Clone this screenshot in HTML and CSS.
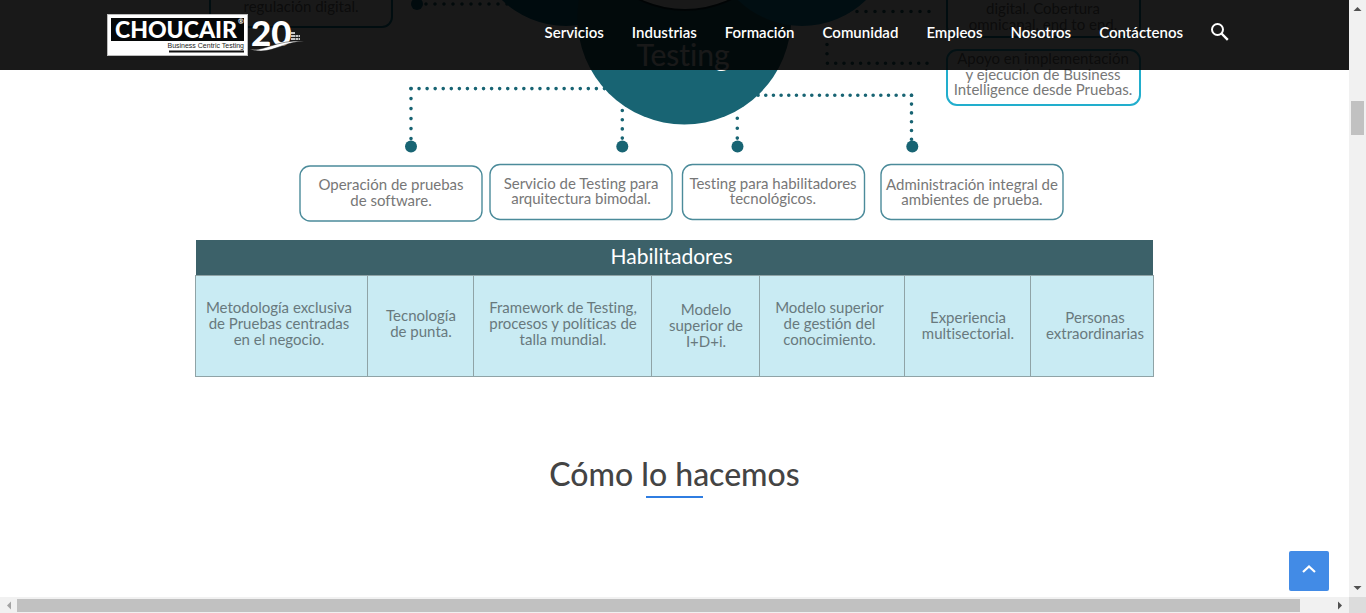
FILE: index.html
```html
<!DOCTYPE html>
<html lang="es">
<head>
<meta charset="utf-8">
<meta name="viewport" content="width=device-width, initial-scale=1">
<title>Choucair Testing</title>
<link rel="stylesheet" href="styles.css">
</head>
<body>
<div class="window">
  <div class="viewport">
    <header class="topbar">
      <a class="logo" href="#" aria-label="Choucair">
        <svg width="198" height="42" viewBox="0 0 198 42">
          <rect x="0.5" y="0.5" width="140" height="41" fill="#fff" stroke="#bbb"/>
          <rect x="4" y="4" width="133" height="23" fill="#050708"/>
          <text class="logo-name" x="8" y="24">CHOUCAIR</text>
          <text class="logo-reg" x="131" y="10">®</text>
          <text class="logo-tag" x="137" y="34" text-anchor="end">Business Centric Testing</text>
          <path d="M62 37.500H137" stroke="#111" stroke-width="2"/>
          <text class="logo-years" x="144" y="32">20</text>
          <path d="M143 35C157 38 168 26 197 27C178 28 168 37 154 37C149 37 145 36 143 35Z" fill="#fff" stroke="#1a1a1a" stroke-width="0.500"/>
          <path d="M184 19h4M184 22h9M184 25h9" stroke="#fff" stroke-width="1.600" stroke-dasharray="4 0.500 3 0.500"/>
        </svg>
      </a>
      <nav class="menu">
        <a href="#">Servicios</a>
        <a href="#">Industrias</a>
        <a href="#">Formación</a>
        <a href="#">Comunidad</a>
        <a href="#">Empleos</a>
        <a href="#">Nosotros</a>
        <a href="#">Contáctenos</a>
        <button class="search" type="button" aria-label="Buscar">
          <svg width="18" height="18" viewBox="0 0 18 18" fill="none" stroke="#fff">
            <circle cx="6.500" cy="6.500" r="5.500" stroke-width="2"/>
            <path d="M10.500 10.500L16.800 16.800" stroke-width="2.400"/>
          </svg>
        </button>
      </nav>
    </header>

    <main class="content">
      <svg class="diagram" viewBox="190 0 970 240" role="img" aria-label="Servicios de Testing">
        <g class="node-deep">
          <rect x="210" y="-40" width="182" height="67" rx="10"/>
          <rect x="947" y="-40" width="193" height="77" rx="10"/>
        </g>
        <rect class="node-bright" x="947" y="50" width="193" height="55" rx="10"/>
        <g class="node">
          <rect x="300" y="166" width="182" height="55" rx="10"/>
          <rect x="490" y="164.500" width="182" height="55" rx="10"/>
          <rect x="682.500" y="164.500" width="182" height="55" rx="10"/>
          <rect x="881" y="164.500" width="182" height="55" rx="10"/>
        </g>

        <g class="dots">
          <path d="M417 4H510" stroke-dasharray="0 9"/>
          <path d="M411 88.600H607" stroke-dasharray="0 8.060"/>
          <path d="M411 88.600V140" stroke-dasharray="0 10"/>
          <path d="M622.300 110.500V139" stroke-dasharray="0 9.200"/>
          <path d="M737.300 118.300V139" stroke-dasharray="0 9.900"/>
          <path d="M911.500 95.300H756" stroke-dasharray="0 7.670"/>
          <path d="M911.500 95.300V140" stroke-dasharray="0 8.800"/>
          <path d="M929 11.500H845" stroke-dasharray="0 9"/>
          <path d="M827 44.500V60" stroke-dasharray="0 9.300"/>
          <path d="M927 63.300H824" stroke-dasharray="0 8.300"/>
        </g>
        <g fill="#186473">
          <circle cx="417" cy="4" r="6" fill="#0b6e90"/>
          <circle cx="411" cy="146.500" r="6"/>
          <circle cx="622.300" cy="146.500" r="6"/>
          <circle cx="737.500" cy="146.500" r="6"/>
          <circle cx="912.300" cy="146.500" r="6"/>
        </g>

        <circle cx="566" cy="-66" r="92" fill="#00708f"/>
        <circle cx="684.300" cy="17.500" r="107" fill="#186473"/>
        <circle cx="802" cy="-66" r="92" fill="#0e8fb5"/>
        <circle cx="685" cy="-94" r="105" fill="#0d3038"/>
        <circle cx="685" cy="-96" r="105" fill="#fff"/>
        <text class="hub" x="683" y="66">Testing</text>

        <g class="label">
          <text x="301" y="12">regulación digital.</text>
          <text x="1043" y="14">digital. Cobertura</text>
          <text x="1043" y="30">omnicanal, end to end.</text>
          <text x="1043" y="64">Apoyo en implementación</text>
          <text x="1043" y="80">y ejecución de Business</text>
          <text x="1043" y="95">Intelligence desde Pruebas.</text>
          <text x="391" y="190">Operación de pruebas</text>
          <text x="391" y="206">de software.</text>
          <text x="581" y="189">Servicio de Testing para</text>
          <text x="581" y="204">arquitectura bimodal.</text>
          <text x="773" y="189">Testing para habilitadores</text>
          <text x="773" y="204">tecnológicos.</text>
          <text x="972" y="190">Administración integral de</text>
          <text x="972" y="205">ambientes de prueba.</text>
        </g>
      </svg>

      <table class="enablers">
        <colgroup><col class="c1"><col class="c2"><col class="c3"><col class="c4"><col class="c5"><col class="c6"><col class="c7"></colgroup>
        <thead><tr><th colspan="7" scope="colgroup">Habilitadores</th></tr></thead>
        <tbody>
          <tr>
            <td class="shift-left">Metodología exclusiva<br>de Pruebas centradas<br>en el negocio.</td>
            <td>Tecnología<br>de punta.</td>
            <td>Framework de Testing,<br>procesos y políticas de<br>talla mundial.</td>
            <td class="low">Modelo<br>superior de<br>I+D+i.</td>
            <td class="shift-left">Modelo superior<br>de gestión del<br>conocimiento.</td>
            <td class="low">Experiencia<br>multisectorial.</td>
            <td class="low shift-right">Personas<br>extraordinarias</td>
          </tr>
        </tbody>
      </table>

      <h2 class="title">Cómo lo hacemos</h2>
    </main>

    <button class="to-top" type="button" aria-label="Volver arriba">
      <svg width="14" height="8" viewBox="0 0 14 8" fill="none" stroke="#fff" stroke-width="2.200"><path d="M1 7L7 1.500L13 7"/></svg>
    </button>
  </div>

  <div class="bar bar-v">
    <svg width="9" height="5" viewBox="0 0 9 5"><path d="M0.500 5L4.500 1L8.500 5Z" fill="#505050"/></svg>
    <div class="track"><div class="thumb"></div></div>
    <svg width="9" height="5" viewBox="0 0 9 5"><path d="M0.500 0L4.500 4L8.500 0Z" fill="#505050"/></svg>
  </div>
  <div class="bar bar-h">
    <svg width="5" height="9" viewBox="0 0 5 9"><path d="M5 0.500L1 4.500L5 8.500Z" fill="#a3a3a3"/></svg>
    <div class="track"><div class="thumb"></div></div>
    <svg width="5" height="9" viewBox="0 0 5 9"><path d="M0 0.500L4 4.500L0 8.500Z" fill="#505050"/></svg>
  </div>
  <div class="corner"></div>
</div>
</body>
</html>
```

FILE: styles.css
```css
* { box-sizing: border-box; }

body {
  margin: 0;
  font-family: Lato, "Open Sans", sans-serif;
  font-variant-ligatures: none;
  background: #fff;
}

.window {
  display: grid;
  grid-template-columns: 1fr 17px;
  grid-template-rows: 1fr 16px;
  height: 100vh;
}

.viewport {
  position: relative;
  overflow: hidden;
  min-width: 0;
}

/* Header */
.topbar {
  position: absolute;
  inset: 0 0 auto;
  z-index: 2;
  display: flex;
  align-items: center;
  justify-content: space-between;
  height: 70px;
  padding: 0 120px 0 107px;
  background: rgba(0, 0, 0, 0.9);
}

.logo svg { display: block; }
.logo-name { font-size: 23px; font-weight: 900; fill: #fff; }
.logo-reg { font-size: 7px; font-weight: 700; fill: #fff; }
.logo-tag { font-family: "Liberation Sans", sans-serif; font-size: 7px; fill: #222; }
.logo-years { font-size: 35px; font-weight: 900; fill: #fff; }

.menu {
  display: flex;
  align-items: center;
  gap: 28px;
  padding-bottom: 6px;
}

.menu a {
  color: #fff;
  font-size: 15px;
  font-weight: 600;
  line-height: 20px;
  text-decoration: none;
}

.search {
  display: flex;
  padding: 0;
  border: 0;
  background: none;
}

/* Diagram */
.content {
  display: flex;
  flex-direction: column;
  align-items: center;
}

.diagram {
  display: block;
  width: 100%;
  max-width: 970px;
}

.node { fill: #fff; stroke: #4b8b9a; stroke-width: 1.4; }
.node-deep { fill: #fff; stroke: #1286a0; stroke-width: 2; }
.node-bright { fill: #fff; stroke: #22aecd; stroke-width: 2; }
.dots { fill: none; stroke: #186473; stroke-width: 3.6; stroke-linecap: round; }
.hub { font-size: 30px; fill: #fff; text-anchor: middle; }
.label { font-size: 15px; fill: #777; text-anchor: middle; }

/* Enablers table */
.enablers {
  width: 100%;
  max-width: 957px;
  table-layout: fixed;
  border-collapse: collapse;
  color: #68797d;
  font-size: 15px;
  line-height: 16px;
  text-align: center;
}

.enablers th {
  height: 35px;
  padding: 0 6px 2px 0;
  background: #3c6169;
  color: #fff;
  font-size: 21px;
  font-weight: 400;
  line-height: 24px;
}

.enablers td {
  height: 101px;
  padding: 0 0 6px;
  border: 1px solid #8fa3a6;
  background: #c9ebf3;
}

.enablers .low { padding-bottom: 2px; }
.enablers .shift-left { padding-right: 6px; }
.enablers .shift-right { padding-left: 6px; }

.c1 { width: 172px; }
.c2 { width: 106px; }
.c3 { width: 178px; }
.c4 { width: 108px; }
.c5 { width: 145px; }
.c6 { width: 126px; }
.c7 { width: 122px; }

/* Section title */
.title {
  display: flex;
  flex-direction: column;
  align-items: center;
  gap: 2px;
  margin: 77px 0 0;
  color: #444;
  font-size: 32px;
  font-weight: 500;
  line-height: 40px;
}

.title::after {
  content: "";
  width: 57px;
  height: 2px;
  background: #2f7de1;
}

.to-top {
  position: absolute;
  right: 20px;
  bottom: 6px;
  display: flex;
  align-items: center;
  justify-content: center;
  width: 40px;
  height: 40px;
  padding: 0 0 4px;
  border: 0;
  border-radius: 2px;
  background: #428be6;
}

/* Scrollbars */
.bar {
  display: flex;
  align-items: center;
  background: #f1f1f1;
}

.bar-v { flex-direction: column; padding: 6px 0; }
.bar-h { padding: 0 6px; }
.track { flex: 1; display: flex; }
.bar-v .track { flex-direction: column; padding: 90px 0 6px; }
.bar-h .track { padding: 0 38px 0 6px; }
.bar-v .thumb { width: 13px; height: 34px; background: #c1c1c1; }
.bar-h .thumb { flex: 1; height: 13px; background: #c1c1c1; }
.corner { background: #dcdcdc; }
```
